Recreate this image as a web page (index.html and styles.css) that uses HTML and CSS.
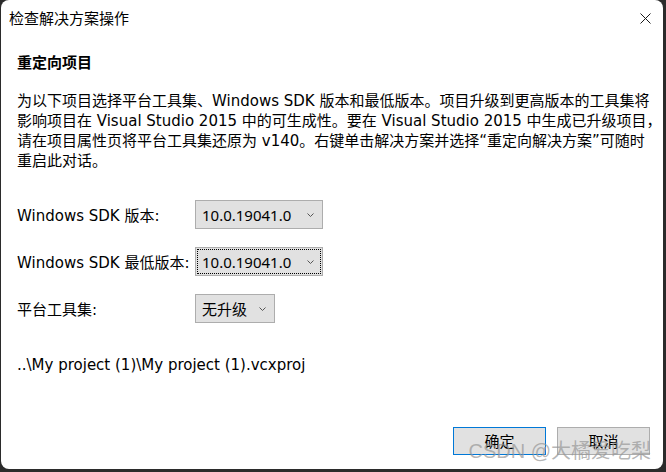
FILE: index.html
```html
<!DOCTYPE html>
<html lang="zh-CN">
<head>
<meta charset="utf-8">
<title>检查解决方案操作</title>
<link rel="stylesheet" href="styles.css">
</head>
<body>
<div class="window">
  <header class="titlebar">
    <span class="title">检查解决方案操作</span>
    <span class="close" aria-label="关闭">
      <svg width="11" height="11" viewBox="0 0 11 11"><path d="M0.5 0.5 L10.5 10.5 M10.5 0.5 L0.5 10.5" stroke="#1a1a1a" stroke-width="1" fill="none"/></svg>
    </span>
  </header>
  <main class="content">
    <h1 class="heading">重定向项目</h1>
    <p class="desc">为以下项目选择平台工具集、Windows SDK 版本和最低版本。项目升级到更高版本的工具集将<br>影响项目在 Visual Studio 2015 中的可生成性。要在 Visual Studio 2015 中生成已升级项目，<br>请在项目属性页将平台工具集还原为 v140。右键单击解决方案并选择“重定向解决方案”可随时<br>重启此对话。</p>
    <div class="form">
      <span class="label">Windows SDK 版本:</span>
      <div class="combo wide"><span>10.0.19041.0</span><svg class="chev" width="7" height="4" viewBox="0 0 7 4"><path d="M0.5 0.5 L3.5 3.5 L6.5 0.5" stroke="#555" fill="none"/></svg></div>
      <span class="label">Windows SDK 最低版本:</span>
      <div class="combo wide focused"><span>10.0.19041.0</span><svg class="chev" width="7" height="4" viewBox="0 0 7 4"><path d="M0.5 0.5 L3.5 3.5 L6.5 0.5" stroke="#555" fill="none"/></svg></div>
      <span class="label">平台工具集:</span>
      <div class="combo narrow"><span>无升级</span><svg class="chev" width="7" height="4" viewBox="0 0 7 4"><path d="M0.5 0.5 L3.5 3.5 L6.5 0.5" stroke="#555" fill="none"/></svg></div>
    </div>
    <p class="path">..\My project (1)\My project (1).vcxproj</p>
  </main>
  <footer class="actions">
    <button class="btn primary">确定</button>
    <button class="btn">取消</button>
  </footer>
  <div class="watermark">CSDN @大橘爱吃梨</div>
</div>
</body>
</html>
```
FILE: styles.css
```css
* { box-sizing: border-box; }
html, body {
  margin: 0;
  padding: 0;
}
body {
  width: 666px;
  height: 472px;
  background: #2b2b2b;
  font-family: "DejaVu Sans", "Noto Sans CJK SC", sans-serif;
  font-size: 15px;
  color: #000;
  overflow: hidden;
}
.window {
  position: relative;
  margin-left: 1px;
  width: 662px;
  height: 469px;
  background: #fff;
  border-radius: 8px;
  display: flex;
  flex-direction: column;
}
.titlebar {
  height: 38px;
  display: flex;
  align-items: center;
  justify-content: space-between;
  padding: 0 12px 0 8px;
}
.title {
  font-size: 15px;
  line-height: 20px;
}
.close {
  display: flex;
  width: 11px;
  height: 11px;
  margin-top: -1px;
}
.content {
  padding: 0 16px;
}
.heading {
  margin: 15px 0 0;
  font-size: 15px;
  font-weight: bold;
  line-height: 20px;
}
.desc {
  margin: 18px 0 0;
  line-height: 20px;
  white-space: nowrap;
}
.form {
  margin-top: 29px;
  display: grid;
  grid-template-columns: 178px auto;
  grid-auto-rows: 29px;
  row-gap: 18px;
  align-items: center;
  justify-items: start;
}
.label {
  line-height: 20px;
  margin-top: 2px;
}
.combo {
  position: relative;
  height: 29px;
  background: #e1e1e1;
  border: 1px solid #adadad;
  display: flex;
  align-items: center;
  justify-content: space-between;
  padding: 0 8px 0 6px;
  font-family: "Noto Sans", "Noto Sans CJK SC", sans-serif;
  line-height: 20px;
}
.combo.wide { width: 128px; }
.combo.narrow { width: 80px; }
.combo.focused::after {
  content: "";
  position: absolute;
  inset: 1px;
  border: 1px dotted #000;
}
.chev { display: block; margin-top: 1px; }
.path {
  margin: 32px 0 0;
  line-height: 20px;
}
.actions {
  margin-top: auto;
  display: flex;
  justify-content: flex-end;
  gap: 11px;
  padding: 0 13px 14px 0;
}
.btn {
  width: 93px;
  height: 28px;
  background: #e1e1e1;
  border: 1px solid #adadad;
  font-family: "Noto Sans", "Noto Sans CJK SC", sans-serif;
  font-size: 15px;
  color: #000;
  padding: 0;
  line-height: 20px;
}
.btn.primary {
  border: 1px solid #0078d7;
}
.watermark {
  position: absolute;
  right: 12px;
  bottom: 6px;
  font-family: "Liberation Sans", "Noto Sans CJK SC", sans-serif;
  font-size: 20px;
  line-height: 24px;
  color: rgba(150, 150, 150, 0.7);
  white-space: nowrap;
  pointer-events: none;
}
```
